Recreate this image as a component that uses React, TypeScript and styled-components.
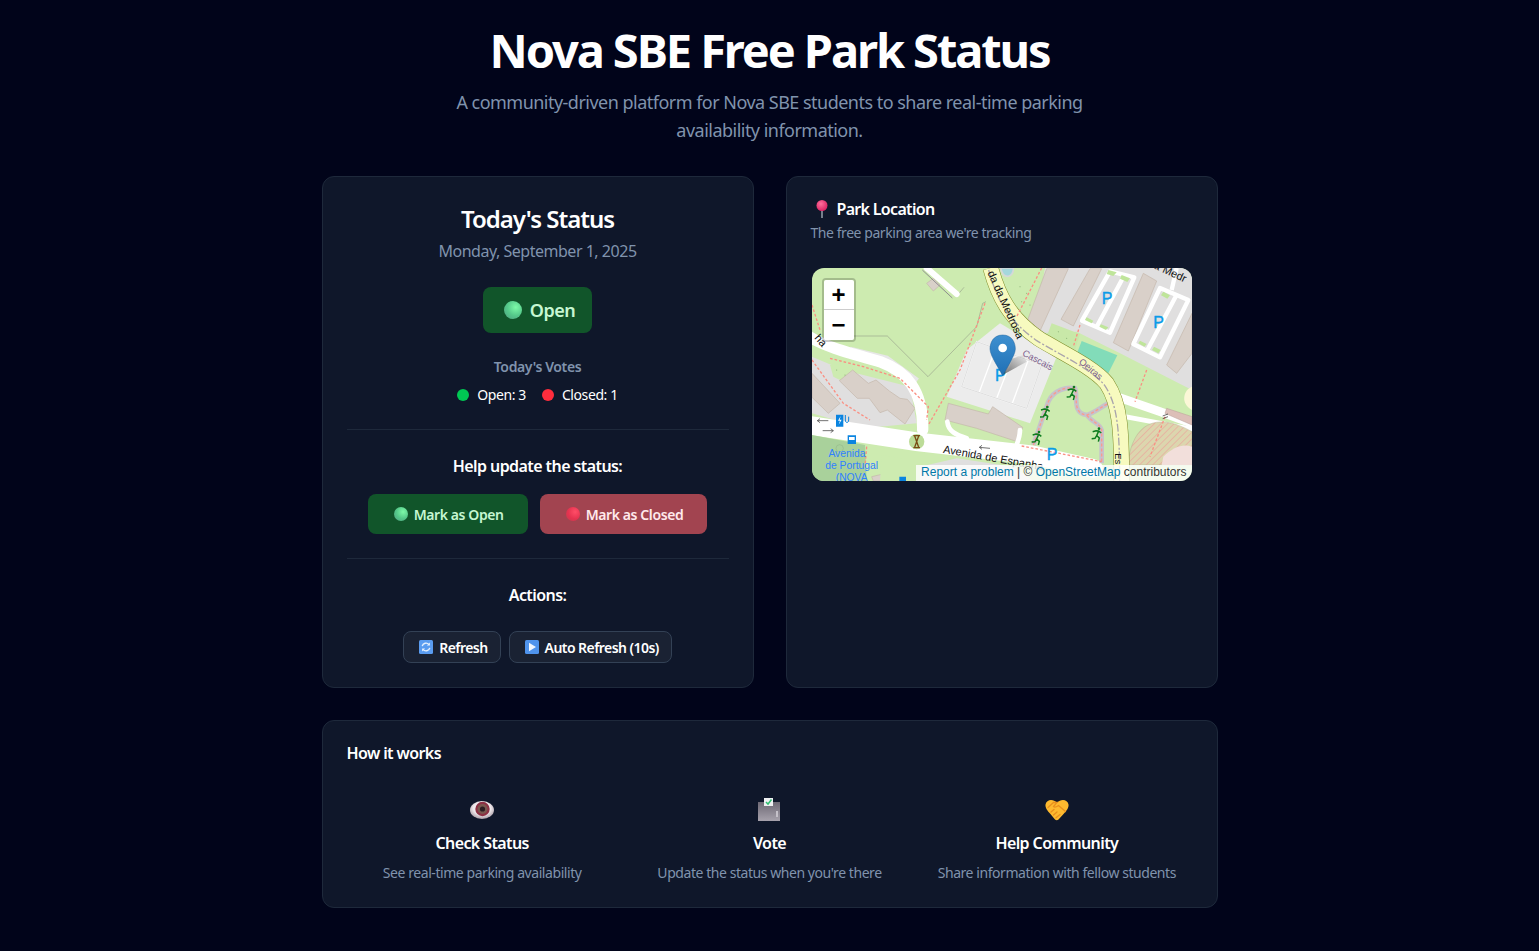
import styled, { createGlobalStyle } from "styled-components";

const GlobalStyle = createGlobalStyle`
  * {
    box-sizing: border-box;
  }

  body {
    margin: 0;
    background: #01041a;
    color: #fff;
    font-family: "Noto Sans", "Open Sans", sans-serif;
  }
`;

const PinIcon = () => (
  <svg width="16" height="20" viewBox="0 0 16 20">
    <defs>
      <radialGradient id="pinHead" cx="0.4" cy="0.35" r="0.7">
        <stop offset="0" stopColor="#ff6f9c" />
        <stop offset="1" stopColor="#d81f5f" />
      </radialGradient>
    </defs>
    <rect x="7.4" y="8" width="1.2" height="11" fill="#b9c2cc" />
    <circle cx="8" cy="6.5" r="5.5" fill="url(#pinHead)" />
  </svg>
);

const RefreshIcon = () => (
  <svg width="14" height="14" viewBox="0 0 14 14">
    <rect width="14" height="14" rx="1.5" fill="#5a9cf0" />
    <path
      d="M3.2 6.2A3.9 3.9 0 0 1 10 4.6M10.8 7.8A3.9 3.9 0 0 1 4 9.4"
      fill="none"
      stroke="#e6f0fc"
      strokeWidth="1.4"
    />
    <path d="M10.9 2.6v3h-3zM3.1 11.4v-3h3z" fill="#e6f0fc" />
  </svg>
);

const PlayIcon = () => (
  <svg width="14" height="14" viewBox="0 0 14 14">
    <rect width="14" height="14" rx="1.5" fill="#4f93ec" />
    <path d="M4 2.8 11 7l-7 4.2z" fill="#f1f6fd" />
  </svg>
);

const EyeIcon = () => (
  <svg width="26" height="20" viewBox="0 0 26 20">
    <defs>
      <radialGradient id="eyeWhite" cx="0.5" cy="0.4" r="0.6">
        <stop offset="0.6" stopColor="#efe9ec" />
        <stop offset="1" stopColor="#a99ca6" />
      </radialGradient>
    </defs>
    <ellipse cx="13" cy="10" rx="12" ry="9" fill="url(#eyeWhite)" />
    <circle cx="13.5" cy="9" r="7.2" fill="#8c3044" />
    <circle cx="13.5" cy="9" r="5" fill="#79574f" />
    <circle cx="13.5" cy="9" r="2.6" fill="#2c1c22" />
  </svg>
);

const BallotIcon = () => (
  <svg width="24" height="24" viewBox="0 0 24 24">
    <defs>
      <linearGradient id="ballotBox" x1="0" y1="0" x2="0" y2="1">
        <stop offset="0" stopColor="#6d6874" />
        <stop offset="1" stopColor="#a7a2ac" />
      </linearGradient>
    </defs>
    <rect x="1" y="4" width="22" height="19" fill="url(#ballotBox)" />
    <rect x="7" y="0" width="9" height="8" fill="#eef0f2" />
    <path d="M9 4l2 2 3.5-4.5" fill="none" stroke="#2fbf71" strokeWidth="1.5" />
    <rect x="19" y="13" width="2" height="6" fill="#c5c1c9" />
  </svg>
);

const HandshakeIcon = () => (
  <svg width="24" height="22" viewBox="0 0 24 22">
    <path
      d="M0.500 5.500C1 2.500 3.500 1 6 1 8.500 1 10 2.200 12 3.500 14 2.200 15.500 1 18 1 20.500 1 23 2.500 23.500 5.500 24 8.500 21.500 12 19 14.500L13.500 20.500C12.500 21.500 11 21.500 10 20.500L5 14.500C2.500 12 0 8.500 0.500 5.500z"
      fill="#fdb92f"
    />
    <path
      d="M3 8.500 8.500 3.500 12 3.500 8.500 7.500C10 9 12 7.500 13.500 6.500L20.500 12.500M6 13 9 10.500M8.500 16 12 13M11 18.800 15 15.500"
      fill="none"
      stroke="#e98f1d"
      strokeWidth="1.300"
      strokeLinecap="round"
    />
  </svg>
);

const Runner = ({ x, y }: { x: number; y: number }) => (
  <g transform={`translate(${x} ${y})`} fill="none" stroke="#0e7c1e" strokeWidth="4.500">
    <circle cx="7" cy="-19" r="4" fill="#0e7c1e" stroke="none" />
    <path d="M-12 -10 L-2 -13 L6 -12 L14 -6 M6 -12 L0 2 L8 9 L5 20 M0 2 L-5 10 L-15 11" />
  </g>
);

const ParkingMark = ({ x, y }: { x: number; y: number }) => (
  <text
    x={x}
    y={y}
    fontFamily="Liberation Sans, sans-serif"
    fontSize="48"
    fill="#0a9be8"
    stroke="#0a9be8"
    strokeWidth="1.200"
  >
    P
  </text>
);

const ROAD = "M572 234C595 320 630 385 715 445 770 480 880 530 920 580 960 640 965 720 965 873";
const TRACK =
  "M700 765 745 635C760 600 800 590 825 595 835 620 815 670 860 675 880 670 905 650 925 640M860 675C880 700 900 700 905 720L905 820";

const MapDrawing = () => (
  <svg width="380" height="213" viewBox="36 234 1140 639">
    <defs>
      <pattern id="hatch" width="14" height="14" patternUnits="userSpaceOnUse" patternTransform="rotate(-45)">
        <rect width="14" height="14" fill="#dcd6ae" />
        <rect width="14" height="2" fill="#eba79c" />
      </pattern>
    </defs>
    <rect x="36" y="234" width="1140" height="639" fill="#cdebb0" />

    {/* grey land use around the buildings */}
    <path d="M735 234H1176V600L960 490 830 425 700 430z" fill="#e0dfdf" />
    <path d="M36 500 130 540 330 590 350 700 190 715 36 670z" fill="#e0dfdf" />
    <path d="M600 400 770 500 690 700 440 620 500 480z" fill="#ececec" />
    <path d="M36 550 120 640 85 670 36 622z" fill="#d9d0c9" stroke="#c4b6ab" strokeWidth="2" />

    {/* dotted scrub */}
    <path d="M640 240 735 234 680 400 650 370z" fill="#cdebb0" />
    <path d="M755 400 840 432 825 480 740 440z" fill="#c8e8a8" />
    <path d="M90 525 150 520 175 575 120 570 100 560z" fill="#cdebb0" />

    {/* buildings */}
    <g fill="#d9d0c9" stroke="#c4b6ab" strokeWidth="2">
      <path d="M740 236H805L720 423 680 398z" />
      <path d="M870 236H905L820 408 783 388z" />
      <path d="M1030 250 1070 273 985 483 940 458z" />
      <path d="M1176 370V490L1130 550 1100 525z" />
      <path d="M118 572 158 540 205 580 228 570 268 603 300 625 322 628 345 655 315 702 262 660 240 668 208 625 172 625z" />
      <path d="M445 640 565 672 578 650 668 712 652 755 530 715 435 690z" />
      <path d="M380 280 400 265 420 285 400 303z" />
      <path d="M215 860 280 845 290 873H220z" />
    </g>

    {/* parking rows */}
    <g fill="#e0dfdf" stroke="#fff" strokeWidth="13" strokeLinejoin="round">
      <path d="M930 244 1003 262 930 428 846 392z" />
      <path d="M1080 294 1165 330 1080 502 1000 462z" />
    </g>
    <g stroke="#fff" strokeWidth="13">
      <path d="M975 252 890 410M1130 314 1040 484M1130 234 1115 300" />
    </g>
    <g fill="#bfe59a">
      <path d="M925 240 950 247 940 258 920 252z" />
      <path d="M965 255 990 265 982 276 960 266z" />
      <path d="M860 382 880 392 875 400 855 390z" />
      <path d="M903 403 925 412 918 420 898 410z" />
      <path d="M1090 305 1110 316 1102 326 1083 316z" />
      <path d="M1020 452 1040 462 1033 470 1015 460z" />
      <path d="M1062 470 1082 480 1075 490 1056 480z" />
    </g>

    {/* teal pond and water */}
    <path d="M845 453 952 496 925 550 830 493z" fill="#82dcb9" />
    <path d="M602 234H640C642 262 610 272 602 234z" fill="#a5d8dd" stroke="#d5d8d8" strokeWidth="5" />

    {/* central parking */}
    <g fill="#ececec" stroke="#fff" strokeWidth="4">
      <path d="M530 455 725 525 680 655 485 590z" />
    </g>
    <path d="M587 475 538 606M640 495 590 625M685 510 637 640" stroke="#fff" strokeWidth="4" />
    <path d="M530 455 725 525 680 655 485 590z" fill="none" stroke="#b9b9b9" strokeWidth="1.500" />

    {/* boundary line */}
    <path
      d="M160 438H262L384 560 530 410 548 340 558 335M380 234 470 318 492 292"
      fill="none"
      stroke="#8a8f80"
      strokeWidth="1.500"
    />

    {/* white roads */}
    <path d="M150 478 260 505 352 572" fill="none" stroke="#e7e7e7" strokeWidth="16" />
    <g fill="none" stroke="#fff" strokeLinecap="round">
      <path d="M20 435C70 470 150 490 240 515 320 545 370 600 368 720" strokeWidth="34" />
      <path d="M20 705 350 755 700 795 880 835" strokeWidth="56" />
      <path d="M380 234 470 312" strokeWidth="18" />
      <path d="M950 620 1080 665 1190 705" strokeWidth="26" />
      <path d="M975 680 1190 720" strokeWidth="14" />
      <path d="M442 695C445 725 470 735 500 745M660 720C660 745 650 760 645 780" strokeWidth="14" />
    </g>
    <path d="M375 234 465 318" stroke="#8d8d8d" strokeWidth="3" fill="none" transform="translate(-8 6)" />
    <path d="M360 830 470 805 640 830 700 873H360z" fill="#e0dfdf" />
    <path d="M245 795 305 805 305 873H240z" fill="#cdebb0" />
    <path d="M36 735 195 765 200 873H36z" fill="#a9d19b" />
    <circle cx="119" cy="775" r="11" fill="none" stroke="#8fb286" strokeWidth="1.500" />

    {/* track around the park */}
    <path d={TRACK} fill="none" stroke="#c7c3cb" strokeWidth="14" />
    <path d={TRACK} fill="none" stroke="#fa9a90" strokeWidth="4" strokeDasharray="9 6" />

    {/* hatched corner */}
    <path d="M985 810C1000 710 1060 660 1176 725V825H985z" fill="url(#hatch)" stroke="#b9b594" strokeWidth="1.500" />
    <path d="M1090 800C1120 770 1150 760 1176 770V825H1085z" fill="#f2dfdb" />
    <path d="M1100 655 1176 680V705L1095 670z" fill="#dcbfb8" stroke="#b89f99" strokeWidth="1.500" />
    <path d="M1176 590C1150 600 1140 640 1176 660z" fill="#fbf7d7" />

    {/* main yellow road */}
    <path d={ROAD} fill="none" stroke="#7d8b28" strokeWidth="48" />
    <path d={ROAD} fill="none" stroke="#f7fabf" strokeWidth="45" />
    <path d={ROAD} fill="none" stroke="#a9a4ac" strokeWidth="4" strokeDasharray="24 6 6 6" transform="translate(-6 6)" />

    {/* salmon footpaths */}
    <g fill="none" stroke="#fa8f82" strokeWidth="4" strokeDasharray="8 6">
      <path d="M725 234 650 380M840 405 820 470M1040 540 1005 635M1095 680 1050 800" />
      <path d="M555 340 480 540 385 705" />
      <path d="M36 510 130 640 210 690M36 345 60 420M90 505 190 530 300 565 345 610 385 650 380 690" />
      <path d="M665 768 905 815M200 770 195 830" />
    </g>

    {/* scattered dots on scrub */}
    <g fill="#7da56b">
      <circle cx="660" cy="290" r="1.500" />
      <circle cx="680" cy="310" r="1.500" />
      <circle cx="665" cy="335" r="1.500" />
      <circle cx="690" cy="345" r="1.500" />
      <circle cx="775" cy="425" r="1.500" />
      <circle cx="800" cy="445" r="1.500" />
      <circle cx="110" cy="540" r="1.500" />
      <circle cx="135" cy="555" r="1.500" />
    </g>

    <ParkingMark x="905" y="342" />
    <ParkingMark x="1060" y="414" />
    <ParkingMark x="585" y="572" />
    <ParkingMark x="740" y="810" />
    <Runner x={815} y={610} />
    <Runner x={735} y={670} />
    <Runner x={710} y={745} />
    <Runner x={890} y={735} />

    {/* road labels */}
    <g fontFamily="Liberation Sans, sans-serif">
      <text transform="translate(562 248) rotate(66)" fontSize="33" fill="#111">
        da da Medrosa
      </text>
      <text transform="translate(1060 234) rotate(25)" fontSize="33" fill="#111">
        a Medr
      </text>
      <text transform="translate(42 445) rotate(48)" fontSize="33" fill="#111">
        ha
      </text>
      <text transform="translate(428 788) rotate(10)" fontSize="33" fill="#111">
        Avenida de Espanha
      </text>
      <text transform="translate(945 790) rotate(90)" fontSize="28" fill="#111">
        Es
      </text>
      <text transform="translate(665 495) rotate(28)" fontSize="28" fill="#7c5f8d">
        Cascais
      </text>
      <text transform="translate(835 518) rotate(40)" fontSize="28" fill="#7c5f8d">
        Oeiras
      </text>
      <g fontSize="31" fill="#2f80ff" textAnchor="middle">
        <text x="141" y="802">
          Avenida
        </text>
        <text x="155" y="838">
          de Portugal
        </text>
        <text x="155" y="872">
          (NOVA
        </text>
      </g>
    </g>

    {/* bus stop, charger, arrows, fountain */}
    <path d="M143 736H168V762H143z" fill="#0a84e0" />
    <path d="M147 741H164V750H147z" fill="#fff" />
    <path d="M108 674H130V710H108z" fill="#0a84e0" />
    <path d="M122 678 114 692H120L116 704 125 689H119z" fill="#fff" />
    <path d="M136 675V690C136 700 146 700 146 690V680" fill="none" stroke="#0a84e0" strokeWidth="3" />
    <path d="M298 860H318V873H298z" fill="#0a84e0" />
    <path
      d="M85 692 52 692M60 686 52 692 60 698M68 722 100 722M92 716 100 722 92 728M570 775 538 772M546 766 538 772 546 778"
      fill="none"
      stroke="#555"
      strokeWidth="2.500"
    />
    <path d="M1088 678 1104 672M1088 686 1104 680" stroke="#222" strokeWidth="2" />
    <circle cx="350" cy="755" r="23" fill="#bcdc98" />
    <path d="M340 737H360M340 773H360M344 738 356 772M356 738 344 772" stroke="#7a4c14" strokeWidth="4" />

    {/* marker */}
    <defs>
      <linearGradient id="markerBody" x1="0" y1="0" x2="0" y2="1">
        <stop offset="0" stopColor="#3f90d0" />
        <stop offset="1" stopColor="#1f70b5" />
      </linearGradient>
      <linearGradient id="markerShadow" x1="0" y1="1" x2="1" y2="0">
        <stop offset="0" stopColor="#333" stopOpacity="0.7" />
        <stop offset="1" stopColor="#333" stopOpacity="0" />
      </linearGradient>
    </defs>
    <path d="M608 555 625 510 670 495 680 515z" fill="url(#markerShadow)" />
    <path
      d="M608 435C580 435 570 458 570 477 570 497 600 540 608 557 616 540 646 497 646 477 646 458 636 435 608 435z"
      fill="url(#markerBody)"
      stroke="#20659f"
      strokeWidth="1.500"
    />
    <circle cx="608" cy="474" r="13" fill="#fff" />
  </svg>
);

const App = () => (
  <Page>
    <GlobalStyle />
    <Header>
      <Title>Nova SBE Free Park Status</Title>
      <Subtitle>
        A community-driven platform for Nova SBE students to share real-time parking availability
        information.
      </Subtitle>
    </Header>

    <Columns>
      <StatusCard>
        <CardTitle>Today's Status</CardTitle>
        <DateLine>Monday, September 1, 2025</DateLine>
        <StatusBadge>
          <Orb size={18} tone="green" />
          Open
        </StatusBadge>
        <VotesLabel>Today's Votes</VotesLabel>
        <VotesRow>
          <VoteCount>
            <VoteDot color="#00c853" />
            Open: 3
          </VoteCount>
          <VoteCount>
            <VoteDot color="#ff2d3d" />
            Closed: 1
          </VoteCount>
        </VotesRow>
        <Divider />
        <SectionLabel>Help update the status:</SectionLabel>
        <VoteButtons>
          <VoteButton tone="green">
            <Orb size={14} tone="green" />
            Mark as Open
          </VoteButton>
          <VoteButton tone="red">
            <Orb size={14} tone="red" />
            Mark as Closed
          </VoteButton>
        </VoteButtons>
        <Divider />
        <SectionLabel>Actions:</SectionLabel>
        <ActionButtons>
          <ActionButton>
            <RefreshIcon />
            Refresh
          </ActionButton>
          <ActionButton>
            <PlayIcon />
            Auto Refresh (10s)
          </ActionButton>
        </ActionButtons>
      </StatusCard>

      <MapCard>
        <MapTitle>
          <PinIcon />
          Park Location
        </MapTitle>
        <MapSubtitle>The free parking area we're tracking</MapSubtitle>
        <MapFrame>
          <MapDrawing />
          <ZoomControl>
            <ZoomButton>+</ZoomButton>
            <ZoomButton>−</ZoomButton>
          </ZoomControl>
          <Attribution>
            <MapLink>Report a problem</MapLink> | © <MapLink>OpenStreetMap</MapLink> contributors
          </Attribution>
        </MapFrame>
      </MapCard>
    </Columns>

    <HowCard>
      <HowTitle>How it works</HowTitle>
      <Steps>
        <Step>
          <StepIcon>
            <EyeIcon />
          </StepIcon>
          <StepTitle>Check Status</StepTitle>
          <StepText>See real-time parking availability</StepText>
        </Step>
        <Step>
          <StepIcon>
            <BallotIcon />
          </StepIcon>
          <StepTitle>Vote</StepTitle>
          <StepText>Update the status when you're there</StepText>
        </Step>
        <Step>
          <StepIcon>
            <HandshakeIcon />
          </StepIcon>
          <StepTitle>Help Community</StepTitle>
          <StepText>Share information with fellow students</StepText>
        </Step>
      </Steps>
    </HowCard>
  </Page>
);

export default App;

const Page = styled.main`
  width: 896px;
  min-height: 951px;
  margin: 0 auto;
  padding-top: 16px;
`;

const Header = styled.header`
  text-align: center;
  margin-bottom: 32px;
`;

const Title = styled.h1`
  margin: 0 0 4px;
  font-size: 47px;
  line-height: 68px;
  font-weight: 700;
  letter-spacing: -2.1px;
  color: #fff;
`;

const Subtitle = styled.p`
  width: 672px;
  margin: 0 auto;
  font-size: 18px;
  line-height: 28px;
  letter-spacing: -0.52px;
  color: #8093ad;
`;

const Card = styled.section`
  background: #0f172a;
  border: 1px solid #1e293b;
  border-radius: 12px;
  padding: 24px;
`;

const Columns = styled.div`
  display: grid;
  grid-template-columns: 1fr 1fr;
  gap: 32px;
  margin-bottom: 32px;
`;

const StatusCard = styled(Card)`
  height: 512px;
  display: flex;
  flex-direction: column;
  align-items: center;
`;

const CardTitle = styled.h2`
  margin: 0;
  font-size: 24px;
  line-height: 36px;
  font-weight: 600;
  letter-spacing: -1px;
`;

const DateLine = styled.div`
  margin-top: 2px;
  font-size: 16px;
  line-height: 24px;
  letter-spacing: -0.48px;
  color: #8093ad;
`;

const StatusBadge = styled.div`
  display: flex;
  flex: none;
  align-items: center;
  gap: 8px;
  height: 46px;
  margin-top: 24px;
  padding: 0 17px 0 21px;
  border-radius: 8px;
  background: #11552a;
  color: #c6f7d2;
  font-size: 18px;
  font-weight: 600;
  letter-spacing: -0.45px;
`;

const Orb = styled.span<{ size: number; tone: "green" | "red" }>`
  width: ${(props) => props.size}px;
  height: ${(props) => props.size}px;
  flex: none;
  border-radius: 50%;
  background: ${(props) =>
    props.tone === "green"
      ? "radial-gradient(circle at 65% 35%, #7dfaa8 0%, #55c98a 50%, #4d9c80 100%)"
      : "radial-gradient(circle at 65% 35%, #ff4d67 0%, #e5324f 55%, #b8404f 100%)"};
`;

const VotesLabel = styled.div`
  margin-top: 24px;
  font-size: 14px;
  line-height: 20px;
  font-weight: 600;
  letter-spacing: -0.38px;
  color: #8093ad;
`;

const VotesRow = styled.div`
  display: flex;
  gap: 16px;
  margin-top: 8px;
`;

const VoteCount = styled.div`
  display: flex;
  align-items: center;
  gap: 8px;
  font-size: 14px;
  line-height: 20px;
  letter-spacing: -0.4px;
`;

const VoteDot = styled.span<{ color: string }>`
  width: 12px;
  height: 12px;
  border-radius: 50%;
  background: ${(props) => props.color};
`;

const Divider = styled.hr`
  align-self: stretch;
  flex: none;
  width: 100%;
  height: 1px;
  margin: 24px 0 0;
  border: 0;
  background: #1e293b;
`;

const SectionLabel = styled.div`
  margin-top: 24px;
  font-size: 16px;
  line-height: 24px;
  font-weight: 600;
  letter-spacing: -0.58px;
`;

const VoteButtons = styled.div`
  display: flex;
  gap: 12px;
  margin-top: 16px;
`;

const VoteButton = styled.button<{ tone: "green" | "red" }>`
  display: flex;
  align-items: center;
  justify-content: center;
  gap: 6px;
  height: 40px;
  padding: 0 24px 0 26px;
  border: 0;
  border-radius: 8px;
  background: ${(props) => (props.tone === "green" ? "#11552a" : "#a24450")};
  color: ${(props) => (props.tone === "green" ? "#c6f7d2" : "#ffe9ec")};
  font-family: inherit;
  font-size: 14px;
  font-weight: 600;
  letter-spacing: -0.4px;
`;

const ActionButtons = styled.div`
  display: flex;
  gap: 8px;
  margin-top: 24px;
`;

const ActionButton = styled.button`
  display: flex;
  align-items: center;
  gap: 6px;
  height: 32px;
  padding: 0 12px 0 15px;
  border: 1px solid #334155;
  border-radius: 8px;
  background: #1a2233;
  color: #fff;
  font-family: inherit;
  font-size: 14px;
  font-weight: 600;
  letter-spacing: -0.55px;
`;

const MapCard = styled(Card)`
  height: 512px;
`;

const MapTitle = styled.h3`
  display: flex;
  align-items: center;
  gap: 7px;
  height: 16px;
  margin: 0;
  padding-left: 3px;
  font-size: 16px;
  line-height: 16px;
  font-weight: 600;
  letter-spacing: -0.68px;
`;

const MapSubtitle = styled.p`
  margin: 6px 0 0;
  font-size: 14px;
  line-height: 20px;
  letter-spacing: -0.44px;
  color: #8093ad;
`;

const MapFrame = styled.div`
  position: relative;
  width: 380px;
  height: 213px;
  margin: 25px 0 0 1px;
  border-radius: 12px;
  overflow: hidden;
  font-family: "Liberation Sans", sans-serif;

  svg {
    display: block;
  }
`;

const ZoomControl = styled.div`
  position: absolute;
  top: 10px;
  left: 10px;
  width: 34px;
  border: 2px solid rgba(0, 0, 0, 0.2);
  border-radius: 4px;
  background-clip: padding-box;
`;

const ZoomButton = styled.div`
  height: 30px;
  background: #fff;
  color: #000;
  font-size: 24px;
  font-weight: 700;
  line-height: 30px;
  text-align: center;

  &:first-child {
    border-bottom: 1px solid #ccc;
    border-radius: 2px 2px 0 0;
  }

  &:last-child {
    border-radius: 0 0 2px 2px;
  }
`;

const Attribution = styled.div`
  position: absolute;
  right: 0;
  bottom: 0;
  padding: 0 5px 1px;
  background: rgba(255, 255, 255, 0.8);
  color: #333;
  font-size: 12px;
  line-height: 15px;
`;

const MapLink = styled.span`
  color: #0078a8;
`;

const HowCard = styled(Card)`
  height: 188px;
`;

const HowTitle = styled.h3`
  margin: 0;
  font-size: 16px;
  line-height: 16px;
  font-weight: 600;
  letter-spacing: -0.6px;
`;

const Steps = styled.div`
  display: grid;
  grid-template-columns: repeat(3, 1fr);
  gap: 16px;
  margin-top: 33px;
`;

const Step = styled.div`
  display: flex;
  flex-direction: column;
  align-items: center;
  text-align: center;
`;

const StepIcon = styled.div`
  display: flex;
  align-items: center;
  justify-content: center;
  height: 32px;
`;

const StepTitle = styled.div`
  margin-top: 5px;
  font-size: 16px;
  line-height: 24px;
  font-weight: 600;
  letter-spacing: -0.6px;
`;

const StepText = styled.div`
  margin-top: 8px;
  font-size: 14px;
  line-height: 20px;
  letter-spacing: -0.44px;
  color: #8093ad;
`;
